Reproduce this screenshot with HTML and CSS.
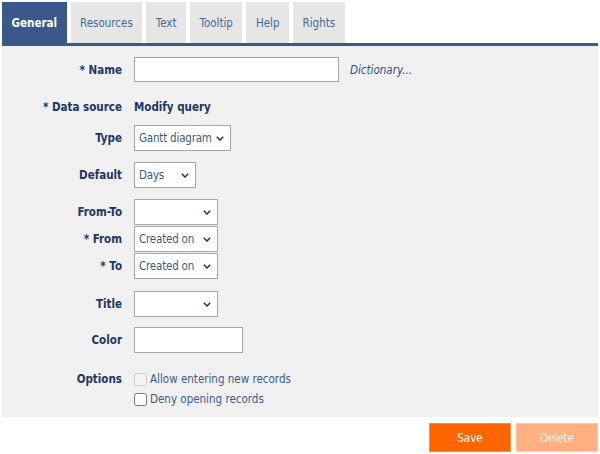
FILE: index.html
```html
<!DOCTYPE html>
<html lang="en">
<head>
<meta charset="utf-8">
<title>General</title>
<link rel="stylesheet" href="styles.css">
</head>
<body>
<div class="page">
  <nav class="tabs">
    <span class="tab active">General</span>
    <span class="tab">Resources</span>
    <span class="tab">Text</span>
    <span class="tab">Tooltip</span>
    <span class="tab">Help</span>
    <span class="tab">Rights</span>
  </nav>
  <section class="panel">
    <div class="row row-name">
      <label class="lbl">* Name</label>
      <div class="field"><span class="input w-name"></span><span class="dict">Dictionary...</span></div>
    </div>
    <div class="row row-ds">
      <label class="lbl">* Data source</label>
      <div class="field"><span class="link-bold">Modify query</span></div>
    </div>
    <div class="row row-type">
      <label class="lbl">Type</label>
      <div class="field"><span class="select w-type"><span class="val">Gantt diagram</span><svg class="chev" width="8" height="5" viewBox="0 0 8 5"><path d="M0.8 0.8 L4 4 L7.2 0.8" fill="none" stroke="#1d3562" stroke-width="1.5"/></svg></span></div>
    </div>
    <div class="row row-default">
      <label class="lbl">Default</label>
      <div class="field"><span class="select w-default"><span class="val">Days</span><svg class="chev" width="8" height="5" viewBox="0 0 8 5"><path d="M0.8 0.8 L4 4 L7.2 0.8" fill="none" stroke="#1d3562" stroke-width="1.5"/></svg></span></div>
    </div>
    <div class="row row-fromto">
      <label class="lbl">From-To</label>
      <div class="field"><span class="select w-date"><span class="val"></span><svg class="chev" width="8" height="5" viewBox="0 0 8 5"><path d="M0.8 0.8 L4 4 L7.2 0.8" fill="none" stroke="#1d3562" stroke-width="1.5"/></svg></span></div>
    </div>
    <div class="row row-tight">
      <label class="lbl">* From</label>
      <div class="field"><span class="select w-date"><span class="val">Created on</span><svg class="chev" width="8" height="5" viewBox="0 0 8 5"><path d="M0.8 0.8 L4 4 L7.2 0.8" fill="none" stroke="#1d3562" stroke-width="1.5"/></svg></span></div>
    </div>
    <div class="row row-tight">
      <label class="lbl">* To</label>
      <div class="field"><span class="select w-date"><span class="val">Created on</span><svg class="chev" width="8" height="5" viewBox="0 0 8 5"><path d="M0.8 0.8 L4 4 L7.2 0.8" fill="none" stroke="#1d3562" stroke-width="1.5"/></svg></span></div>
    </div>
    <div class="row row-title">
      <label class="lbl">Title</label>
      <div class="field"><span class="select w-date"><span class="val"></span><svg class="chev" width="8" height="5" viewBox="0 0 8 5"><path d="M0.8 0.8 L4 4 L7.2 0.8" fill="none" stroke="#1d3562" stroke-width="1.5"/></svg></span></div>
    </div>
    <div class="row row-color">
      <label class="lbl">Color</label>
      <div class="field"><span class="input w-color"></span></div>
    </div>
    <div class="row row-opt">
      <label class="lbl">Options</label>
      <div class="field"><label class="check disabled"><input type="checkbox" disabled><span>Allow entering new records</span></label></div>
    </div>
    <div class="row row-opt2">
      <span class="lbl"></span>
      <div class="field"><label class="check"><input type="checkbox"><span>Deny opening records</span></label></div>
    </div>
  </section>
  <div class="actions">
    <button class="btn save">Save</button>
    <button class="btn delete">Delete</button>
  </div>
</div>
</body>
</html>
```
FILE: styles.css
```css
html, body {
  margin: 0;
  padding: 0;
  background: #ffffff;
}
body {
  font-family: "DejaVu Sans Condensed", "DejaVu Sans", sans-serif;
  font-stretch: condensed;
  font-size: 11.5px;
  color: #3d5a8a;
}
.page {
  padding: 2px 2px 0 2px;
}
.tabs {
  display: flex;
  gap: 4px;
  height: 41px;
  border-bottom: 3px solid #3a598a;
}
.tab {
  display: flex;
  align-items: center;
  padding: 0 9.5px;
  background: #e6e6e6;
  color: #4a6694;
}
.tab.active {
  background: #3a598a;
  color: #ffffff;
  font-weight: bold;
  padding: 0 9.5px;
}
.panel {
  background: #f0f0f0;
  padding: 11px 0 8px 0;
}
.row {
  display: grid;
  grid-template-columns: 120px 1fr;
  column-gap: 12px;
  align-items: center;
  min-height: 26px;
}
.lbl {
  text-align: right;
  font-weight: bold;
  color: #1d3562;
}
.field {
  display: flex;
  align-items: center;
}
.row-name { min-height: 25px; }
.row-ds { margin-top: 12px; }
.row-type { margin-top: 5px; }
.row-default { margin-top: 11px; }
.row-fromto { margin-top: 11px; }
.row-tight { margin-top: 1px; }
.row-title { margin-top: 12px; }
.row-color { margin-top: 10px; }
.row-opt { margin-top: 16px; min-height: 20px; }
.row-opt2 { min-height: 20px; }
.input {
  box-sizing: border-box;
  display: block;
  height: 26px;
  background: #ffffff;
  border: 1px solid #a6a6a6;
}
.w-name { width: 205px; height: 25px; }
.w-color { width: 109px; }
.dict {
  margin-left: 11px;
  font-style: italic;
  color: #2e4f86;
}
.link-bold {
  font-weight: bold;
  color: #1d3562;
}
.select {
  box-sizing: border-box;
  display: flex;
  align-items: center;
  justify-content: space-between;
  gap: 4px;
  height: 26px;
  padding: 0 6px 0 4px;
  background: #ffffff;
  border: 1px solid #a6a6a6;
  color: #3d5a8a;
}
.val {
  letter-spacing: -0.2px;
  white-space: nowrap;
}
.chev { display: block; flex: none; }
.w-type { width: 97px; }
.w-default { width: 62px; }
.w-date { width: 84px; }
.check {
  display: flex;
  align-items: center;
  gap: 3px;
  color: #3d5a8a;
}
.check input {
  margin: 0;
  width: 13px;
  height: 13px;
}
.actions {
  display: flex;
  justify-content: flex-end;
  gap: 5px;
  margin-top: 6px;
}
.btn {
  width: 82px;
  height: 29px;
  border: 1px solid #ff8a40;
  font-family: inherit;
  font-stretch: condensed;
  font-size: 11.5px;
  color: #ffffff;
  cursor: pointer;
}
.btn.save { background: #ff6600; }
.btn.delete { background: #ffaf80; border-color: #ffc6a3; color: #fff3ec; }
```
